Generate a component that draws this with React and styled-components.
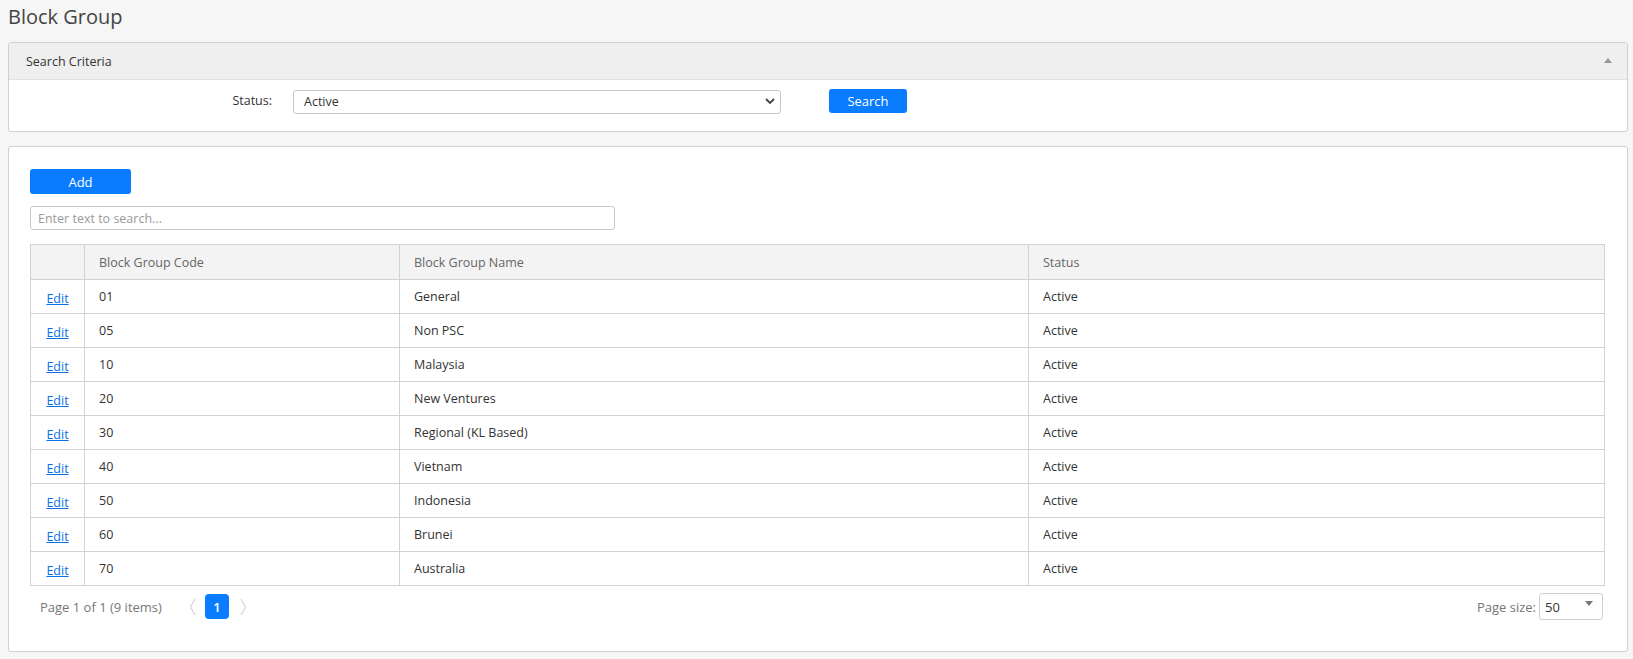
import React from 'react';
import styled, { createGlobalStyle } from 'styled-components';

const GlobalStyle = createGlobalStyle`
    html, body {
        margin: 0;
        padding: 0;
        background-color: #f6f6f6;
        font-family: "Open Sans", "Noto Sans", sans-serif;
        color: #333;
    }
`;

const rows = [
    { code: '01', name: 'General', status: 'Active' },
    { code: '05', name: 'Non PSC', status: 'Active' },
    { code: '10', name: 'Malaysia', status: 'Active' },
    { code: '20', name: 'New Ventures', status: 'Active' },
    { code: '30', name: 'Regional (KL Based)', status: 'Active' },
    { code: '40', name: 'Vietnam', status: 'Active' },
    { code: '50', name: 'Indonesia', status: 'Active' },
    { code: '60', name: 'Brunei', status: 'Active' },
    { code: '70', name: 'Australia', status: 'Active' },
];

const App = () => {
    const [status, setStatus] = React.useState('Active');

    return (
        <Page>
            <GlobalStyle />
            <Title>Block Group</Title>

            <Panel>
                <PanelHeader>
                    <span>Search Criteria</span>
                    <CollapseCaret />
                </PanelHeader>
                <CriteriaRow>
                    <Label>Status:</Label>
                    <SelectWrap>
                        <Select value={status} onChange={(e) => setStatus(e.target.value)}>
                            <option>Active</option>
                            <option>Inactive</option>
                        </Select>
                        <SelectArrow viewBox="0 0 10 6">
                            <path d="M1 1l4 4 4-4" fill="none" stroke="#444" strokeWidth="1.8" />
                        </SelectArrow>
                    </SelectWrap>
                    <Button width="78px">Search</Button>
                </CriteriaRow>
            </Panel>

            <Panel spaced>
                <GridBody>
                    <Button width="101px" height="25px">Add</Button>
                    <SearchBox placeholder="Enter text to search..." />

                    <Table>
                        <colgroup>
                            <col style={{ width: 54 }} />
                            <col style={{ width: 315 }} />
                            <col style={{ width: 629 }} />
                            <col />
                        </colgroup>
                        <thead>
                            <tr>
                                <Th />
                                <Th>Block Group Code</Th>
                                <Th>Block Group Name</Th>
                                <Th>Status</Th>
                            </tr>
                        </thead>
                        <tbody>
                            {rows.map((row) => (
                                <tr key={row.code}>
                                    <Td center><EditLink href="#">Edit</EditLink></Td>
                                    <Td>{row.code}</Td>
                                    <Td>{row.name}</Td>
                                    <Td>{row.status}</Td>
                                </tr>
                            ))}
                        </tbody>
                    </Table>

                    <Pager>
                        <PagerLeft>
                            <PagerInfo>Page 1 of 1 (9 items)</PagerInfo>
                            <Chevron viewBox="0 0 8 18" first>
                                <path d="M6 1L1.5 9 6 17" fill="none" stroke="#d4d4d4" strokeWidth="1.2" />
                            </Chevron>
                            <PageButton>1</PageButton>
                            <Chevron viewBox="0 0 8 18">
                                <path d="M2 1l4.5 8L2 17" fill="none" stroke="#d4d4d4" strokeWidth="1.2" />
                            </Chevron>
                        </PagerLeft>
                        <PagerRight>
                            <PagerInfo>Page size:</PagerInfo>
                            <PageSize>
                                <span>50</span>
                                <SmallCaret />
                            </PageSize>
                        </PagerRight>
                    </Pager>
                </GridBody>
            </Panel>
        </Page>
    );
};

const Page = styled.div`
    padding: 2px 5px 8px 8px;
`;

const Title = styled.h1`
    margin: 0 0 10px 0;
    font-size: 20px;
    line-height: 30px;
    font-weight: 400;
    color: #444;
`;

const Panel = styled.div`
    background-color: #fff;
    border: 1px solid #d0d0d0;
    border-radius: 3px;
    margin-top: ${(props) => (props.spaced ? '14px' : '0')};
    overflow: hidden;
`;

const PanelHeader = styled.div`
    display: flex;
    align-items: center;
    justify-content: space-between;
    height: 36px;
    padding: 0 15px 0 17px;
    background-color: #efefef;
    border-bottom: 1px solid #e2e2e2;
    font-size: 12.5px;
    color: #333;
`;

const CollapseCaret = styled.span`
    width: 0;
    height: 0;
    border-left: 4px solid transparent;
    border-right: 4px solid transparent;
    border-bottom: 5px solid #9a9a9a;
    margin-top: -2px;
`;

const CriteriaRow = styled.div`
    display: flex;
    align-items: center;
    padding: 9px 0 18px 0;
`;

const Label = styled.label`
    width: 263px;
    text-align: right;
    font-size: 12.5px;
    color: #333;
    margin-right: 21px;
    margin-top: -2px;
`;

const SelectWrap = styled.div`
    position: relative;
    width: 488px;
    height: 24px;
    margin-right: 48px;
`;

const Select = styled.select`
    appearance: none;
    width: 100%;
    height: 100%;
    box-sizing: border-box;
    border: 1px solid #c8c8c8;
    border-radius: 3px;
    background-color: #fff;
    padding: 0 24px 0 10px;
    font-family: inherit;
    font-size: 12.5px;
    color: #333;
    outline: none;
`;

const SelectArrow = styled.svg`
    position: absolute;
    right: 6px;
    top: 9px;
    width: 10px;
    height: 6px;
    pointer-events: none;
`;

const Button = styled.button`
    width: ${(props) => props.width};
    height: ${(props) => props.height || '24px'};
    border: none;
    border-radius: 3px;
    background-color: #0a7cff;
    color: #fff;
    font-family: inherit;
    font-size: 13px;
    padding: 0;
    cursor: pointer;
`;

const GridBody = styled.div`
    display: flex;
    flex-direction: column;
    align-items: flex-start;
    padding: 22px 22px 31px 21px;
`;

const SearchBox = styled.input`
    margin-top: 12px;
    width: 585px;
    height: 24px;
    box-sizing: border-box;
    border: 1px solid #c8c8c8;
    border-radius: 3px;
    padding: 0 7px;
    font-family: inherit;
    font-size: 12.5px;
    outline: none;

    &::placeholder {
        color: #9a9a9a;
    }
`;

const Table = styled.table`
    margin-top: 14px;
    width: 100%;
    border-collapse: collapse;
    table-layout: fixed;
    font-size: 12.5px;
`;

const Th = styled.th`
    height: 34px;
    padding: 0 14px;
    border: 1px solid #d2d2d2;
    background-color: #f3f3f3;
    font-weight: 400;
    text-align: left;
    color: #666;
`;

const Td = styled.td`
    height: 33px;
    padding: 0 14px;
    border: 1px solid #d2d2d2;
    text-align: ${(props) => (props.center ? 'center' : 'left')};
    color: #333;
`;

const EditLink = styled.a`
    color: #0b6fe8;
    text-decoration: underline;
    position: relative;
    top: 2px;
`;

const Pager = styled.div`
    display: flex;
    align-items: center;
    justify-content: space-between;
    width: 100%;
    margin-top: 7px;
    height: 27px;
`;

const PagerLeft = styled.div`
    display: flex;
    align-items: center;
    padding-left: 10px;
`;

const PagerRight = styled.div`
    display: flex;
    align-items: center;
    gap: 3px;
    padding-right: 2px;
`;

const PagerInfo = styled.span`
    font-size: 13px;
    color: #777;
`;

const Chevron = styled.svg`
    width: 8px;
    height: 18px;
    margin: 0 ${(props) => (props.first ? '8px 0 27px' : '0 0 10px')};
`;

const PageButton = styled.span`
    display: flex;
    align-items: center;
    justify-content: center;
    width: 24px;
    height: 25px;
    border-radius: 4px;
    background-color: #0a7cff;
    color: #fff;
    font-size: 13px;
    font-weight: 600;
`;

const PageSize = styled.div`
    display: flex;
    align-items: center;
    justify-content: space-between;
    width: 64px;
    height: 27px;
    box-sizing: border-box;
    border: 1px solid #cfcfcf;
    border-radius: 3px;
    padding: 0 9px 0 5px;
    font-size: 13px;
    color: #333;
`;

const SmallCaret = styled.span`
    width: 0;
    height: 0;
    border-left: 4px solid transparent;
    border-right: 4px solid transparent;
    border-top: 5px solid #777;
    margin-top: -6px;
`;

export default App;
